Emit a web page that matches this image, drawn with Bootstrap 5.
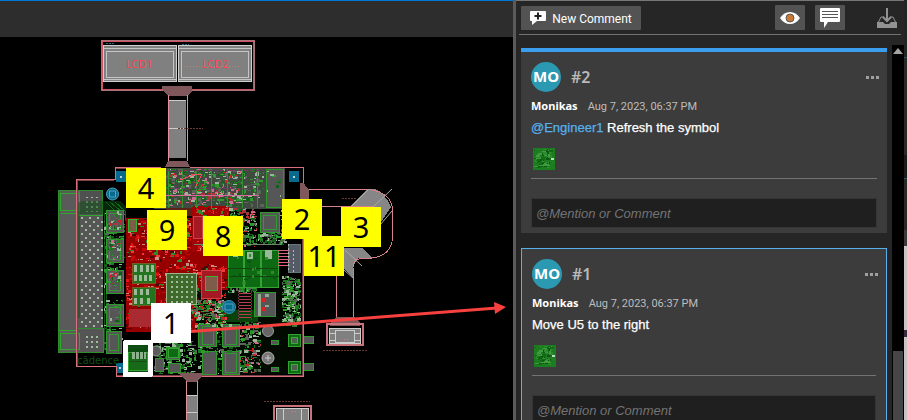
<!DOCTYPE html>
<html lang="en" data-bs-theme="dark">
<head>
<meta charset="utf-8">
<meta name="viewport" content="width=device-width, initial-scale=1">
<title>Board review</title>
<link href="https://cdn.jsdelivr.net/npm/bootstrap@5.3.0/dist/css/bootstrap.min.css" rel="stylesheet">
<style>
body{background:#000;font-family:"Noto Sans","Open Sans",sans-serif;font-size:12px;line-height:18px}
.viewer-bar{height:37px;background:#2d2d2d;border-top:1px solid #0078d7}
.board-svg{display:block;width:513px;height:383px}
.pin{position:absolute;width:40px;height:40px;padding:0;border:0;background:#ff0;color:#000;font-size:29px;line-height:40px;text-align:center}
.pin.current{background:#fff}
.review{width:394px;background:#262626;border-left:3px solid #5a5a5a;color:#fff}
.tools{height:34px;margin:0 3px;padding:0 2px;border-bottom:1px solid #737373}
.review-top{border-top:1px solid #777}
.tool-btn{background:#535353;border:0;border-radius:1px;color:#fff;padding:0}
.btn-new{width:120px;height:24px;gap:6px;padding-top:2px;font-family:Roboto,sans-serif;font-size:12px}
.btn-sq{width:30px;height:25px;margin-left:10px}
.btn-tray{width:20px;height:22px;margin:0 2px 0 32px;background:none}
.thread{padding:13px 5px 0}
.note{background:#3c3c3c;padding:10px 10px 5px;margin-bottom:15px}
.note-new{border-top:4px solid #3b9ded}
.note-active{border:1px solid #56b0ec}
.avatar{width:30px;height:30px;border-radius:50%;background:#2b99b2;font-weight:700;font-size:15px;line-height:28px;text-align:center}
.num{margin-left:10px;font-size:16px;font-weight:600;color:#b9b9b9}
.dots{margin-right:-2px;padding:0;border:0;background:none;height:18px;line-height:0}
.who{margin-top:5px;font-size:11px}
.who time{margin-left:10px;color:#bdbdbd;font-family:Roboto,sans-serif}
.said{margin-top:3px;font:13px/18px "Liberation Sans",Arial,sans-serif;-webkit-text-stroke:.25px currentColor}
.said a{color:#56b0ec;text-decoration:none}
.shot{display:block;margin:11px 2px 0;width:22px;height:22px}
.rule{margin:8px 0 19px;border-top:1px solid #737373;opacity:1}
.reply{display:block;width:100%;height:30px;padding:0 4px;background:#1f1f1f;border:1px solid #353535;color:#ddd;font:italic 13px/18px "Liberation Sans",Arial,sans-serif;border-radius:0}
.reply::placeholder{color:#747474;opacity:1}
.track{width:12px;margin-top:10px;background:#000;padding:3px 1px 0}
.thumb{margin-top:auto;height:69px;background:#464646}
.edge{width:3px;background:linear-gradient(#242424 0 57px,#31506b 57px 58px,#2b2826 58px 155px,#1d1b1a 155px 178px,#31506b 178px 179px,#2b2826 179px 230px,#3c3a39 230px 246px,#c9c5c2 246px 330px,#3a2a3e 330px 337px,#c9c5c2 337px)}
</style>
<script src="https://cdn.jsdelivr.net/npm/bootstrap@5.3.0/dist/js/bootstrap.bundle.min.js"></script>
</head>
<body>
<div class="d-flex vh-100 overflow-hidden">
<main class="flex-grow-1 d-flex flex-column overflow-hidden">
<div class="viewer-bar flex-shrink-0"></div>
<div class="position-relative flex-grow-1 overflow-hidden">
<svg class="board-svg" viewBox="0 37 513 383" shape-rendering="crispEdges" role="img" aria-label="Circuit board layout">
<defs>
<pattern id="pads" width="8" height="8" patternUnits="userSpaceOnUse"><path d="M1 1h2v2h-2zM5 5h2v2h-2z" fill="#9dbd9d"/></pattern>
<pattern id="grid" width="5" height="5" patternUnits="userSpaceOnUse"><path d="M1 1h2v2h-2z" fill="#9dbd9d"/></pattern>
</defs>
<!-- display connectors and upper stem -->
<rect x="102" y="41" width="152" height="49" fill="none" stroke="#a8737a" stroke-width="2"/><rect x="102.500" y="41.500" width="151" height="48" fill="none" stroke="#cf5361"/>
<g fill="#808080" stroke="#cfcfcf"><rect x="103.500" y="45.500" width="73" height="36"/><rect x="178.500" y="45.500" width="73" height="36"/></g>
<g fill="none" stroke="#c4c4c4"><path d="M104 48.500h72M104 79.500h72M179 48.500h72M179 79.500h72"/><rect x="106.500" y="51.500" width="67" height="26"/><rect x="181.500" y="51.500" width="67" height="26"/></g>
<g fill="#ff4050" font-family="Noto Sans" font-size="11"><text x="126" y="68">LCD1</text><text x="202" y="68">LCD2</text></g>
<path d="M184 66.500h56" stroke="#b4877e" stroke-dasharray="1 2"/>
<path d="M106 43.500h9M182 44.500h7" stroke="#1b6e8c" stroke-dasharray="2 1"/>
<path d="M162 86h30v5l-5 5h-19l-5-5z" fill="#80585c"/>
<path d="M169 100h17v58h-17z" fill="#808080"/><path d="M169 100.500h17M169 128.500h17" stroke="#ccc"/>
<path d="M168.500 95v66M187.500 95v66" stroke="#e0919a"/>
<path d="M168 161h19l3 6h-25z" fill="#80585c"/><path d="M178 128.500h25" stroke="#6a3a30" stroke-dasharray="2 1"/>
<!-- side flex arm -->
<path d="M350 206l17-17h8q10 4 16 18l-8 12-8 8h-20z" fill="#868686"/>
<path d="M344 248h18l11 10h-15l-5 9v11l-9-9z" fill="#868686"/>
<g fill="none" stroke="#d9808a"><path d="M303 189.500h66q23 3 23.500 21v28q-1 18-24 20h-8q-7 1-7.500 9v50M309 206.500h65M336.500 276v41"/></g>
<path d="M346 212l23-23M372 208l20-19M380 225l12-14M345 250l17 16M344 270l9 8" stroke="#aaa" fill="none" shape-rendering="auto"/>
<path d="M300 183h4q3 6 5 6v17h-6v-5h-3z" fill="#80585c"/><path d="M342 198.500h14M323 350.500h44" stroke="#6a3a30" stroke-dasharray="2 1"/>
<path d="M336 317h18l6 6v3h-30v-3z" fill="#80585c"/>
<path d="M327 324h36v21h-36z" fill="none" stroke="#c8737b" stroke-width="2"/><path d="M329.500 328.500h31v15h-31zM335.500 330.500h19v12h-19zM330 333.500h5M355 333.500h5M330 340.500h5M355 340.500h5" fill="#808080" stroke="#ccc"/>
<path d="M344 339.500h5" stroke="#e07a80" stroke-dasharray="1 2"/>
<!-- left connector -->
<path d="M58.500 190.500h44v25h-44z" fill="#505050" stroke="#2f8c2c"/>
<path d="M58.500 190.500h21v162h-21z" fill="#5a5a5a" stroke="#2f8c2c"/><path d="M76 216h27v113h-27z" fill="#565656"/><path d="M79 216h24v112h-24z" fill="url(#pads)"/>
<path d="M77.500 328.500h26v24h-26z" fill="#555" stroke="#2f8c2c"/><path d="M86 335h15v15h-15zM86 197h15v15h-15z" fill="url(#grid)"/>
<path d="M60.500 193.500h19v17h-19zM60.500 333.500h19v16h-19zM59 330.500h18M61 213.500h15M77 215.500h26" fill="none" stroke="#2fa82c"/>
<path d="M76 207q3-7 10-6h34l6 5v8h-46v104h-4z" fill="#0b4d12" opacity=".5"/>
<path d="M115 202l10 9v10M110 202l12 10v10M106 202l10 10" stroke="#0d6a1b" fill="none"/>
<path d="M104 213v137M106 213v140" stroke="#0d5817"/>
<!-- board base areas -->
<path d="M126 218h102v114h-102z" fill="#960000"/>
<path d="M154 168h131v41h-131z" fill="#414a41"/>
<path d="M166 208h35v8h-35z" fill="#5c2418"/>
<path d="M192 206h37v46h-37z" fill="#a00404"/>
<path d="M192 290h110v84h-102z" fill="#020a02"/>
<path d="M218 310h40v12h-40z" fill="#07430b"/>
<g id="texture"></g>
<!-- fixed component blocks -->
<g fill="#565656" stroke="#2c9a2b">
<path d="M106.500 210.500h17v22h-17zM106.500 239.500h17v23h-17zM106.500 270.500h17v23h-17zM106.500 304.500h17v22h-17zM106.500 331.500h15v22h-15z"/>
<path d="M266.500 169.500h17v38h-17zM260.500 212.500h19v20h-19z"/>
<path d="M198.500 324.500h18v22h-18zM222.500 324.500h17v22h-17zM202.500 351.500h14v23h-14zM222.500 351.500h17v23h-17zM254.500 292.500h21v24h-21z"/>
<path d="M303.500 336.500h10v7h-10zM303.500 363.500h10v7h-10zM271.500 340.500h7v4h-7zM271.500 367.500h7v4h-7zM155.500 358.500h8v13h-8zM166.500 347.500h13v12h-13zM168.500 363.500h12v9h-12z"/>
</g>
<g fill="none" stroke="#2f9a2d"><path d="M109.500 213.500h11v16h-11zM109.500 242.500h11v17h-11zM109.500 273.500h11v17h-11zM109.500 307.500h11v16h-11zM109.500 334.500h9v16h-9zM263.500 215.500h13v14h-13zM202.500 326.500h11v18h-11zM225.500 326.500h11v18h-11zM225.500 353.500h11v19h-11z"/></g>
<g fill="#0d6a13" stroke="#35a334"><path d="M228.500 250.500h15v37h-15zM244.500 250.500h16v37h-16zM261.500 250.500h17v37h-17zM288.500 334.500h12v12h-12zM288.500 361.500h12v12h-12zM168.500 348.500h10v9h-10z"/></g>
<g fill="#4f5f4f" stroke="#3faa3c"><path d="M291.500 337.500h6v6h-6zM291.500 364.500h6v6h-6z"/></g>
<path d="M228 268.500h50M229 276.500h50" stroke="#11450f"/>
<path d="M247 252h6v7h-6zM265 250h7v9h-7zM233 252h5v5h-5z" fill="#9ab89a"/>
<path d="M168 169v39M182 169v39M196 169v39M211 169v39M227 169v39M242 169v39M257 169v39M208 234v12M223 234h14" stroke="#388c34"/>
<path d="M154 195.500h105" stroke="#d8699a"/><path d="M166 170.500h98M170 188.500h80" stroke="#6f3b62" stroke-dasharray="4 2"/>
<path d="M191 174h11l-7 14M180 180l14-5" stroke="#f84a5a" fill="none"/>
<g id="texture-top"></g>
<!-- bus to right side connector -->
<path d="M288.500 244.500h12v28h-12z" fill="#555b66" stroke="#677"/><path d="M278 250h12M278 253h12M278 256h12M278 259h12M278 262h12M278 265h12" stroke="#d9637c"/>
<path d="M288 244v28M293 250v22" stroke="#a9bfb4" stroke-dasharray="2 2"/>
<path d="M239 293h12M239 296h12M239 299h12M239 302h12M239 305h12M239 308h12M239 311h12M239 314h12M239 317h12" stroke="#b63c52"/><path d="M238.500 291v30M251.500 291v30" stroke="#6b3140" stroke-dasharray="2 1"/>
<path d="M261 298h4v4h-4zM261 307h4v4h-4z" fill="#e32020"/><path d="M258 294h3v22h-3zM265 294h4v3h-4zM265 305h4v2h-4z" fill="#93a893"/>
<path d="M194 244.500h87l8-10" stroke="#6d866d" fill="none"/>
<path d="M129 309h22v18h-22z" fill="#a92a30"/>
<path d="M132.500 263.500h23v20h-23zM132.500 287.500h23v18h-23z" fill="#23731f" stroke="#7a5b25"/>
<path d="M134 265h3v7h-3zM140 265h3v7h-3zM146 265h3v7h-3zM151 265h3v7h-3zM134 275h3v6h-3zM139 275h3v6h-3zM144 275h3v6h-3zM149 275h3v6h-3zM134 289h3v6h-3zM140 289h3v6h-3zM146 289h3v6h-3zM134 298h3v6h-3zM140 298h3v6h-3zM147 298h3v6h-3z" fill="#9eb89a"/>
<path d="M166.500 273.500h30v31h-30z" fill="#3f6a2b" stroke="#9db48d"/><path d="M169 276h26v27h-26z" fill="url(#grid)"/>
<path d="M201.500 270.500h20v28h-20zM193.500 216.500h9v22h-9z" fill="#a51a22" stroke="#d3404d"/>
<path d="M205.500 276.500h12v14h-12zM128.500 219.500h8v12h-8z" fill="#7d5c4a" stroke="#35b52c"/>
<!-- round parts -->
<g shape-rendering="auto"><circle cx="112.500" cy="194" r="6" fill="#086a8d" stroke="#4ea3bd"/><circle cx="229" cy="307" r="6.500" fill="#086a8d" stroke="#3b96b4"/><path d="M225 304h8v6h-8zM109.500 191h6v6h-6z" fill="none" stroke="#4ea3bd"/>
<circle cx="268" cy="331" r="5.500" fill="#666" stroke="#9a9a9a"/><circle cx="268" cy="358" r="6" fill="#777" stroke="#b0b0b0"/><path d="M265 358h6M268 355v6" stroke="#ccc"/><circle cx="156" cy="351" r="5" fill="#5b5b5b" stroke="#8a9a8a"/></g>
<path d="M116 171h11v11h-11zM289 171h10v11h-10zM116 363h8v10h-8z" fill="#086a8d"/><path d="M120 176h2v2h-2zM293 176h2v2h-2zM119 367h2v2h-2z" fill="#b8d4dc"/>
<text x="77" y="364" fill="#0d4f14" font-family="DejaVu Sans" font-size="10">cādence</text>
<!-- board outline -->
<path d="M161 167.500h-46v12h-39v187h40v10h187v-170M303.500 183v-15.500h-114" fill="none" stroke="#d9707b"/>
<path d="M161 168.500h-45M114 180.500h-37v185M117 375.500h185v-170" fill="none" stroke="#7c4048"/>
<!-- lower stem and connector -->
<path d="M180 373h22v3l-5 6h-10l-6-6z" fill="#80585c"/><path d="M187 395h10v25h-10z" fill="#808080"/><path d="M186.500 381v39M197.500 381v39" stroke="#e0919a"/><path d="M187 395.500h10M187 412.500h10" stroke="#ccc"/>
<path d="M274 406h37v18h-37z" fill="none" stroke="#c8737b" stroke-width="2"/><path d="M276.500 408.500h32v16h-32zM283.500 408.500h18v16h-18z" fill="#808080" stroke="#ccc"/><path d="M264 401.500h46" stroke="#6a3a30" stroke-dasharray="2 1"/><path d="M292 411.500h5" stroke="#e07a80" stroke-dasharray="1 2"/>
<!-- highlighted part -->
<rect x="123" y="340" width="30" height="37" rx="2" fill="#fff"/><path d="M128 345h20v27h-20z" fill="#0c4d12"/><path d="M128.500 352.500h19v18h-19z" fill="#166a18" stroke="#35a334"/><path d="M132 352h14v7h-14z" fill="#8db08d"/><path d="M135.500 352v7M139.500 352v7M143.500 352v7M130 347.500h15M129 361.500h18" stroke="#1c4a1c"/>
<!-- callout arrow -->
<g shape-rendering="auto"><path d="M191 331.500L497 308" stroke="#f8413f" stroke-width="3"/><path d="M494 302l12 5-11 7z" fill="#f8413f"/></g>
</svg>
<button type="button" class="pin" style="left:126px;top:131px">4</button>
<button type="button" class="pin" style="left:147px;top:173px">9</button>
<button type="button" class="pin" style="left:203px;top:179px">8</button>
<button type="button" class="pin" style="left:304px;top:199px">11</button>
<button type="button" class="pin" style="left:282px;top:162px">2</button>
<button type="button" class="pin" style="left:341px;top:170px">3</button>
<button type="button" class="pin current" style="left:151px;top:266px">1</button>
</div>
</main>
<aside class="review flex-shrink-0 d-flex" aria-label="Comments">
<div class="flex-grow-1 d-flex flex-column review-top">
<header class="tools flex-shrink-0 d-flex align-items-center">
<button type="button" class="tool-btn btn-new d-flex align-items-center justify-content-center"><svg width="16" height="16" viewBox="0 0 16 16" aria-hidden="true"><path d="M1 0h14q1 0 1 1v8q0 1-1 1H7l-5 4v-4H1q-1 0-1-1V1q0-1 1-1z" fill="#fff"/><path d="M8 1.500v7M4.500 5h7" stroke="#222" stroke-width="2"/></svg><span>New Comment</span></button>
<button type="button" class="tool-btn btn-sq ms-auto d-flex align-items-center justify-content-center" aria-label="Show markers"><svg width="20" height="14" viewBox="0 0 20 14" aria-hidden="true"><path d="M0 7q4-6 10-6t10 6q-4 6-10 6T0 7z" fill="#fff"/><circle cx="10" cy="7" r="4" fill="#c87a35" stroke="#5a5a5a"/></svg></button>
<button type="button" class="tool-btn btn-sq d-flex align-items-center justify-content-center" aria-label="Show comments"><svg width="20" height="20" viewBox="0 0 20 20" aria-hidden="true"><path d="M1 0h18q1 0 1 1v12q0 1-1 1H8l-4 6v-6H1q-1 0-1-1V1q0-1 1-1z" fill="#fff"/><path d="M2 3.500h16M2 6.500h16M2 9.500h16" stroke="#555"/></svg></button>
<button type="button" class="tool-btn btn-tray" aria-label="Download"><svg class="d-block" width="20" height="20" viewBox="0 0 20 20" aria-hidden="true"><path d="M7 9H4L1 15M13 9h3l3 6" fill="none" stroke="#929292"/><path d="M0 14h6l2 2h4l2-2h6v6H0z" fill="#929292"/><path d="M10 0v13M6 9l4 4 4-4" fill="none" stroke="#929292" stroke-width="2"/></svg></button>
</header>
<div class="d-flex flex-grow-1 overflow-hidden">
<div class="thread flex-grow-1">
<article class="note note-new">
<div class="d-flex align-items-center"><span class="avatar">MO</span><span class="num">#2</span><button type="button" class="dots ms-auto" aria-label="More"><svg width="13" height="3" fill="#a0a0a0"><path d="M0 0h3v3H0zM5 0h3v3H5zM10 0h3v3h-3z"/></svg></button></div>
<div class="who"><strong>Monikas</strong><time>Aug 7, 2023, 06:37 PM</time></div>
<div class="said"><a href="#">@Engineer1</a> Refresh the symbol</div>
<svg class="shot" viewBox="0 0 22 22" shape-rendering="crispEdges" aria-hidden="true"><path d="M0 0h22v22H0z" fill="#1b7c20"/><g class="speck"></g></svg>
<hr class="rule">
<input class="reply" type="text" placeholder="@Mention or Comment" aria-label="Reply to comment 2">
</article>
<article class="note note-active">
<div class="d-flex align-items-center"><span class="avatar">MO</span><span class="num">#1</span><button type="button" class="dots ms-auto" aria-label="More"><svg width="13" height="3" fill="#a0a0a0"><path d="M0 0h3v3H0zM5 0h3v3H5zM10 0h3v3h-3z"/></svg></button></div>
<div class="who"><strong>Monikas</strong><time>Aug 7, 2023, 06:37 PM</time></div>
<div class="said">Move U5 to the right</div>
<svg class="shot" viewBox="0 0 22 22" shape-rendering="crispEdges" aria-hidden="true"><path d="M0 0h22v22H0z" fill="#1b7c20"/><g class="speck"></g></svg>
<hr class="rule">
<input class="reply" type="text" placeholder="@Mention or Comment" aria-label="Reply to comment 1">
</article>
</div>
<div class="track flex-shrink-0 d-flex flex-column"><svg class="d-block" width="10" height="6" aria-hidden="true"><path d="M5 0l5 6H0z" fill="#a5a5a5"/></svg><div class="thumb"></div></div>
</div>
</div>
<div class="edge flex-shrink-0"></div>
</aside>
</div>
<script>
// Repeatable scatter of pads and tracks: [x, y, width, height, count, colours]
let seed=7;const rnd=()=>(seed=(seed*16807)%2147483647)/2147483647;
const G=['#2f9a2d','#126018','#9ab59a','#5a645a','#1d7a1f'],R=['#e01515','#c80808','#f03a3a','#4a0808','#c98f86','#2f8a2a'];
function scatter(x,y,w,h,n,c){let s='';for(let i=0;i<n;i++){const a=1+Math.floor(rnd()*4),b=rnd()<.5?1:2+Math.floor(rnd()*2);s+=`<rect x="${x+Math.floor(rnd()*(w-a))}" y="${y+Math.floor(rnd()*(h-b))}" width="${a}" height="${b}" fill="${c[Math.floor(rnd()*c.length)]}"/>`}return s}
const M=[...G,...G,'#b03038','#d06a8f','#c22'];
const fill=(id,list)=>document.getElementById(id).innerHTML=list.map(a=>scatter(...a)).join('');
fill('texture',[
[154,169,92,39,480,M],[243,169,22,39,70,G],[127,219,66,44,250,R],[126,263,102,67,560,R],[196,208,33,44,150,R],[228,208,30,40,190,M],[258,233,28,12,70,G],
[104,210,22,84,210,G],[104,300,20,53,90,G],[192,300,34,22,180,M],[240,322,22,52,170,M],[282,276,20,52,260,G],[198,322,44,54,160,G],[154,340,44,35,190,G],[280,208,8,40,30,G],[228,286,30,8,50,G]
]);
fill('texture-top',[[107,211,16,20,36,M],[107,240,16,22,40,M],[107,271,16,22,30,M],[107,305,16,20,16,G],[198,324,44,4,14,G],[198,350,44,4,14,G],[266,170,17,37,10,G],[229,251,50,36,20,['#0b5510','#2f8a2a']]]);
document.querySelectorAll('.speck').forEach(g=>{seed=11;g.innerHTML=scatter(1,1,20,20,75,['#0b5a10','#3f9a40','#126a16','#2f8a30'])+'<rect x="18" y="10" width="3" height="2" fill="#b9dcb9"/>'});
</script>
</body>
</html>
